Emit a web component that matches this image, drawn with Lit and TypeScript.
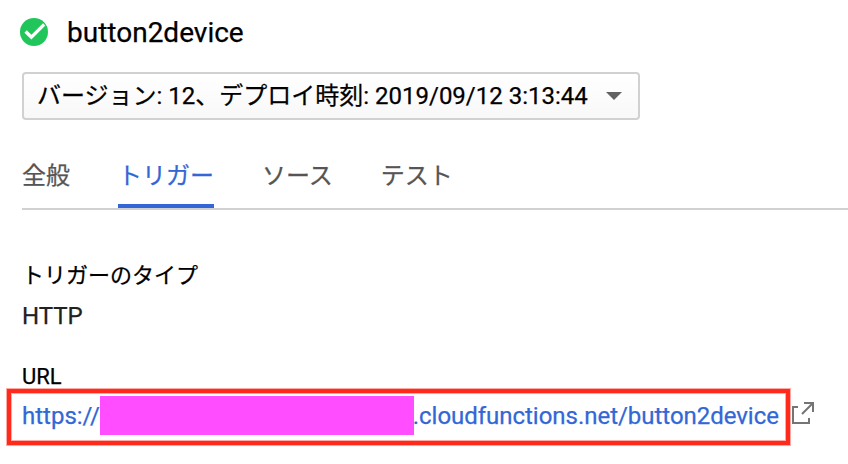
import { LitElement, html, css } from "lit";
import { customElement } from "lit/decorators.js";

@customElement("app-root")
export class AppRoot extends LitElement {
  static styles = css`
    :host { display: block; width: 848px; height: 464px; overflow: hidden; background: #fff; color: #000;
      font-family: Roboto, "Noto Sans CJK JP", sans-serif; font-size: 24px; line-height: 28px; -webkit-text-stroke: 0.25px currentColor; }
    * { box-sizing: border-box; }
    main { display: flex; flex-direction: column; height: 464px; }
    header { display: flex; align-items: center; gap: 19px; height: 64px; padding-left: 20px; font-size: 28px; }
    header span { padding-top: 2px; }
    header svg { width: 28px; height: 28px; }
    .select { display: flex; align-items: center; justify-content: space-between; width: 618px; height: 48px; margin: 8px 0 0 22px;
      padding: 0 16px 0 13px; border: 2px solid #d1d1d1; border-radius: 4px; white-space: nowrap;
      background: linear-gradient(#fff, #f8f8f8); }
    .arrow { border: 8px solid transparent; border-top-color: #616161; border-bottom: 0; }
    nav { display: flex; gap: 48px; margin: 20px 0 0 22px; height: 70px; border-bottom: 2px solid #d1d1d1; color: #555; }
    .tab { height: 68px; padding-top: 22px; white-space: nowrap; }
    .active { color: #3367d6; border-bottom: 4px solid #3367d6; }
    .label { margin: 52px 0 0 22px; font-size: 22px; }
    .value { margin: 12px 0 0 22px; color: #212121; }
    .url-label { margin: 36px 0 0 22px; font-size: 22px; line-height: 22px; }
    .row { display: flex; align-items: flex-start; margin: 1px 0 0 7px; gap: 2px; }
    .url { display: flex; align-items: center; width: 783px; height: 56px; border: 4px solid #ff2a1c;
      box-shadow: 0 0 0 1px #ff2a1c66, inset 0 0 0 1px #ff2a1c66; padding: 0 0 3px 11px; color: #3367d6; white-space: nowrap; }
    .mask { width: 314px; height: 39px; background: #ff4dff; }
    .host { letter-spacing: -0.03px; margin-left: -1px; }
    .row svg { width: 22px; height: 22px; margin-top: 13px; }
  `;
  render() {
    return html`<main>
      <header><svg viewBox="0 0 28 28"><circle cx="14" cy="14" r="14" fill="#20c659"/><path d="M5.6 13.5l5.8 5.7L24.2 6.4" fill="none" stroke="#fff" stroke-width="3.4"/></svg><span>button2device</span></header>
      <div class="select"><span>バージョン: 12、デプロイ時刻: 2019/09/12 3:13:44</span><i class="arrow"></i></div>
      <nav><span class="tab">全般</span><span class="tab active">トリガー</span><span class="tab">ソース</span><span class="tab">テスト</span></nav>
      <div class="label">トリガーのタイプ</div><div class="value">HTTP</div><div class="url-label">URL</div>
      <div class="row"><div class="url"><span>https://</span><span class="mask"></span><span class="host">.cloudfunctions.net/button2device</span></div>
      <svg viewBox="0 0 22 22" fill="none" stroke="#757575" stroke-width="2"><path d="M6 5H1v16h16v-5M12 1h9v9M21 1L10 12"/></svg></div>
    </main>`;
  }
}
